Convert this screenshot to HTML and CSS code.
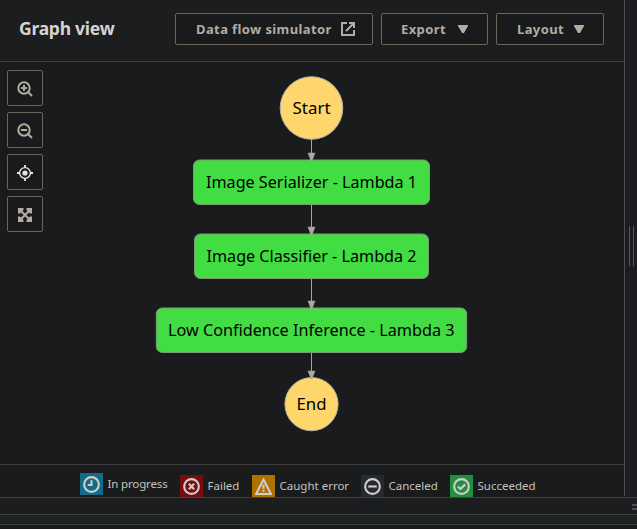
FILE: index.html
```html
<!DOCTYPE html>
<html lang="en">
<head>
<meta charset="utf-8">
<title>Graph view</title>
<link rel="stylesheet" href="styles.css">
</head>
<body>
<div class="workspace">
  <main class="panel">
    <header class="header">
      <h1>Graph view</h1>
      <button class="btn btn-link"><span>Data flow simulator</span>
        <svg width="14" height="14" viewBox="0 0 14 14" fill="none" stroke="currentColor" stroke-width="2"><path d="M6 1H1v12h12V8M8 1h5v5M13 1 5 9"/></svg>
      </button>
      <button class="btn btn-export"><span>Export</span>
        <svg width="10" height="8" viewBox="0 0 10 8" fill="currentColor"><path d="M0 0h10v1L6 8H4L0 1z"/></svg>
      </button>
      <button class="btn btn-layout"><span>Layout</span>
        <svg width="10" height="8" viewBox="0 0 10 8" fill="currentColor"><path d="M0 0h10v1L6 8H4L0 1z"/></svg>
      </button>
    </header>
    <section class="canvas">
      <div class="tools">
        <button class="tool" aria-label="Zoom in"><svg width="16" height="16" viewBox="0 0 16 16" fill="none" stroke="currentColor" stroke-width="2"><circle cx="7" cy="7" r="5.700"/><path d="m11 11 4 4M7 4v6M4 7h6"/></svg></button>
        <button class="tool" aria-label="Zoom out"><svg width="16" height="16" viewBox="0 0 16 16" fill="none" stroke="currentColor" stroke-width="2"><circle cx="7" cy="7" r="5.700"/><path d="m11 11 4 4M4 7h6"/></svg></button>
        <button class="tool tool-active" aria-label="Center"><svg width="16" height="16" viewBox="0 0 16 16" fill="none" stroke="currentColor" stroke-width="1.400"><circle cx="8" cy="8" r="5.400"/><circle cx="8" cy="8" r="2.600" fill="currentColor" stroke="none"/><path stroke-width="1.800" d="M8 0v3M8 13v3M0 8h3M13 8h3"/></svg></button>
        <button class="tool" aria-label="Fit"><svg width="16" height="16" viewBox="0 0 16 16" fill="none" stroke="currentColor" stroke-width="2"><path d="M2 2l12 12M14 2 2 14"/><path fill="currentColor" stroke="none" d="M1 1h5.500v2L3 6.500H1zM15 1v5.500h-2L9.500 3V1zM15 15H9.500v-2L13 9.500h2zM1 15V9.500h2L6.500 13v2z"/></svg></button>
      </div>
      <svg class="graph" width="580" height="402" viewBox="44 62 580 402">
        <path class="edge" d="M311.500 139v18M311.500 204v27M311.500 278v27M311.500 352v23"/>
        <g class="terminal"><circle cx="311.500" cy="108" r="31.300"/><circle cx="311.500" cy="404.200" r="26.600"/></g>
        <g class="state">
          <rect x="193.500" y="160" width="236" height="44.500" rx="6"/>
          <rect x="194.500" y="234" width="234" height="44.500" rx="6"/>
          <rect x="156.300" y="308" width="310.400" height="44.500" rx="6"/>
        </g>
        <path class="arrow" d="M308 153h7l-3 8h-1zM308 227h7l-3 8h-1zM308 301h7l-3 8h-1zM308 371h7l-3 8h-1z"/>
        <g class="label">
          <text x="292.500" y="114" textLength="38" lengthAdjust="spacingAndGlyphs">Start</text>
          <text x="206" y="188" textLength="211" lengthAdjust="spacingAndGlyphs">Image Serializer - Lambda 1</text>
          <text x="206.500" y="262" textLength="210" lengthAdjust="spacingAndGlyphs">Image Classifier - Lambda 2</text>
          <text x="168" y="336" textLength="286.500" lengthAdjust="spacingAndGlyphs">Low Confidence Inference - Lambda 3</text>
          <text x="296.500" y="410" textLength="30" lengthAdjust="spacingAndGlyphs">End</text>
        </g>
      </svg>
    </section>
    <footer class="legend">
      <div class="item progress"><i><svg viewBox="0 0 16 16"><circle cx="8" cy="8" r="6.900"/><path d="M8 4v4.500H4.500"/></svg></i><span>In progress</span></div>
      <div class="item failed"><i><svg viewBox="0 0 16 16"><circle cx="8" cy="8" r="6.900"/><path d="m5.500 5.500 5 5M10.500 5.500l-5 5"/></svg></i><span>Failed</span></div>
      <div class="item caught"><i><svg viewBox="0 0 16 16"><path d="M8 1.500 15 15H1zM8 6v4M8 11v2"/></svg></i><span>Caught error</span></div>
      <div class="item canceled"><i><svg viewBox="0 0 16 16"><circle cx="8" cy="8" r="6.900"/><path d="M4 8h8"/></svg></i><span>Canceled</span></div>
      <div class="item succeeded"><i><svg viewBox="0 0 16 16"><circle cx="8" cy="8" r="6.900"/><path d="m4.500 8 2.500 2.300L11.500 6"/></svg></i><span>Succeeded</span></div>
    </footer>
  </main>
  <aside class="splitter"><div class="grip"></div></aside>
</div>
<div class="drawer"><div class="handle"></div></div>
<div class="drawer-head"></div>
</body>
</html>
```
FILE: styles.css
```css
* { box-sizing: border-box; }
body {
  margin: 0;
  width: 637px;
  height: 529px;
  overflow: hidden;
  background: #1b1a1c;
  color: #d5d3cf;
  font-family: "Noto Sans", sans-serif;
}
svg { display: block; flex: none; }
button { font: inherit; margin: 0; }
.workspace { display: flex; height: 497px; background: #1a1b1d; }
.panel { width: 625px; height: 496px; border-right: 1px solid #4c4e52; }
.header {
  display: flex;
  height: 62px;
  padding: 13px 0 0 19px;
  border-bottom: 1px solid #3b3d3f;
  background: #1c1d1f;
}
h1 {
  width: 156px;
  margin: 0;
  font-size: 17.5px;
  line-height: 30px;
  font-weight: 700;
  letter-spacing: -0.25px;
  white-space: nowrap;
}
.btn {
  display: flex;
  align-items: center;
  justify-content: space-between;
  height: 32px;
  border: 1px solid #6d645a;
  border-radius: 2px;
  background: #191a1b;
  color: #b2aca2;
  font-size: 13px;
  font-weight: 700;
  letter-spacing: 0.4px;
  white-space: nowrap;
}
.btn-link { width: 198px; padding: 0 17px 0 20px; }
.btn-export { width: 107px; margin-left: 8px; padding: 0 19px; }
.btn-layout { width: 108px; margin-left: 8px; padding: 0 19px 0 20px; }
.canvas { display: flex; height: 402px; }
.tools {
  display: flex;
  flex-direction: column;
  gap: 6px;
  width: 44px;
  padding: 8px 0 0 7px;
}
.tool {
  display: flex;
  align-items: center;
  justify-content: center;
  width: 36px;
  height: 36px;
  padding: 1px 0 0;
  border: 1px solid #6d645a;
  border-radius: 2px;
  background: #191a1b;
  color: #b2aca2;
}
.tool-active { color: #e6e6e4; }
.edge { fill: none; stroke: #aaa49c; stroke-width: 1; }
.arrow { fill: #b0a79c; stroke: #b0a79c; stroke-width: 0.5; }
.terminal { fill: #ffd66b; stroke: #b4ada5; stroke-width: 1; }
.state { fill: #41dd43; stroke: #7f9b74; stroke-width: 1; }
.label { font-size: 16.5px; fill: #000; }
.legend {
  display: flex;
  height: 33px;
  padding: 10px 0 0 80px;
  border-top: 1px solid #3b3d3f;
  overflow: hidden;
}
.item {
  display: flex;
  flex: none;
  height: 23px;
  font-size: 11.5px;
  line-height: 22px;
  white-space: nowrap;
  color: #c5c3be;
}
.item i {
  display: flex;
  align-items: center;
  justify-content: center;
  width: 23px;
  height: 22px;
  margin-right: 4.5px;
}
.item svg {
  width: 17px;
  height: 17px;
  fill: none;
  stroke: #cfcdc9;
  stroke-width: 2;
}
.progress { width: 100px; margin-top: -2px; letter-spacing: -0.15px; }
.progress i { background: #126b88; }
.failed { width: 72px; }
.failed i { background: #7b0b0d; }
.caught { width: 109px; }
.caught i { background: #ad7200; }
.canceled { width: 89px; }
.canceled i { background: #26292d; }
.succeeded i { background: #20903f; }
.splitter { width: 12px; padding: 226px 0 0 4px; background: #1c1d1f; }
.grip {
  width: 5px;
  height: 40px;
  border: solid #55585c;
  border-width: 0 1px;
}
.drawer {
  display: flex;
  justify-content: flex-end;
  height: 18px;
  padding-top: 6px;
  border: solid #3e4042;
  border-width: 1px 0;
  background: #1c1d1f;
}
.handle {
  width: 5px;
  height: 6px;
  border: solid #4c4e51;
  border-width: 2px 0;
}
.drawer-head { height: 10px; border-bottom: 1px solid #3e4042; background: #1e2222; }
```
